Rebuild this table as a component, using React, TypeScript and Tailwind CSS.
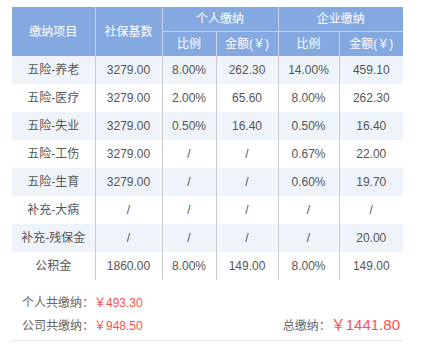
import React from 'react';

const rows = [
  ['五险-养老', '3279.00', '8.00%', '262.30', '14.00%', '459.10'],
  ['五险-医疗', '3279.00', '2.00%', '65.60', '8.00%', '262.30'],
  ['五险-失业', '3279.00', '0.50%', '16.40', '0.50%', '16.40'],
  ['五险-工伤', '3279.00', '/', '/', '0.67%', '22.00'],
  ['五险-生育', '3279.00', '/', '/', '0.60%', '19.70'],
  ['补充-大病', '/', '/', '/', '/', '/'],
  ['补充-残保金', '/', '/', '/', '/', '20.00'],
  ['公积金', '1860.00', '8.00%', '149.00', '8.00%', '149.00'],
];

const font = { fontFamily: '"Liberation Sans", "Noto Sans CJK SC", sans-serif' };

export default function App() {
  return (
    <div className="w-[429px] h-[344px] bg-white overflow-hidden pt-[7px] px-[12px]" style={font}>
      <div className="w-[391px]">
        <table className="w-[391px] border-collapse table-fixed text-[12px]">
          <colgroup>
            <col className="w-[83px]" />
            <col className="w-[67px]" />
            <col className="w-[54px]" />
            <col className="w-[62px]" />
            <col className="w-[61px]" />
            <col className="w-[64px]" />
          </colgroup>
          <thead className="bg-[#84a8e0] text-white">
            <tr className="h-[24px]">
              <th rowSpan={2} className="font-normal border-r border-[#c3d3ee]">缴纳项目</th>
              <th rowSpan={2} className="font-normal border-r border-[#c3d3ee]">社保基数</th>
              <th colSpan={2} className="font-normal border-r border-b border-[#c3d3ee]">个人缴纳</th>
              <th colSpan={2} className="font-normal border-b border-[#c3d3ee]">企业缴纳</th>
            </tr>
            <tr className="h-[25px]">
              <th className="font-normal border-r border-[#c3d3ee]">比例</th>
              <th className="font-normal border-r border-[#c3d3ee]">金额(￥)</th>
              <th className="font-normal border-r border-[#c3d3ee]">比例</th>
              <th className="font-normal">金额(￥)</th>
            </tr>
          </thead>
          <tbody className="text-[#555]">
            {rows.map((r, i) => (
              <tr key={i} className={i % 2 === 0 ? 'h-[28px] bg-[#eff4fb]' : 'h-[28px] bg-white'}>
                {r.map((c, j) => (
                  <td key={j} className={j < 5 ? 'text-center p-0 border-r border-[#cccccc]' : 'text-center p-0'}>
                    {c}
                  </td>
                ))}
              </tr>
            ))}
          </tbody>
        </table>

        <div className="pl-[10px] pt-[11px] text-[12px] text-[#666]">
          <div className="h-[23px] flex items-center">
            个人共缴纳：<span className="text-[#ff5050]">￥493.30</span>
          </div>
          <div className="h-[23px] flex items-center justify-between">
            <div>
              公司共缴纳：<span className="text-[#ff5050]">￥948.50</span>
            </div>
            <div className="flex items-center pr-[3px]">
              <span>总缴纳：</span>
              <span className="text-[15px] text-[#ff5050]">￥1441.80</span>
            </div>
          </div>
        </div>
        <div className="mt-[3px] h-px bg-[#e6e6e6]" />
      </div>
    </div>
  );
}
